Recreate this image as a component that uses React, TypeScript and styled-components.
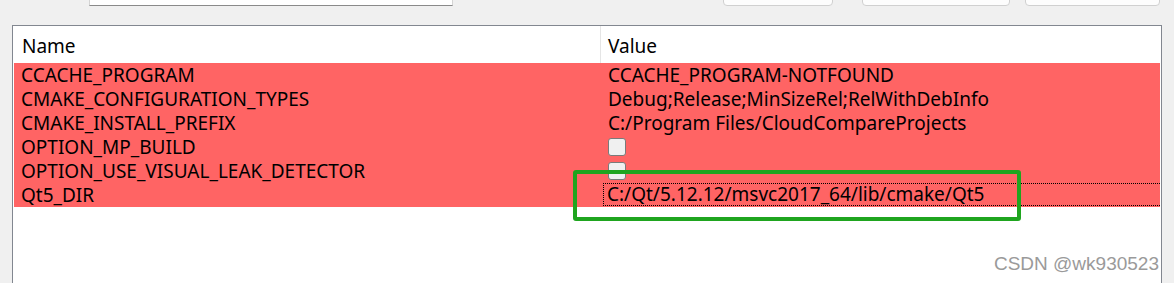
import React from "react";
import styled, { createGlobalStyle } from "styled-components";

const GlobalStyle = createGlobalStyle`
	body {
		margin: 0;
		background: #f0f0f0;
		font-family: "Noto Sans", "Open Sans", sans-serif;
	}
`;

const Page = styled.div`
	position: relative;
	width: 1174px;
	height: 283px;
	overflow: hidden;
`;

const Toolbar = styled.div`
	display: flex;
	align-items: flex-end;
	height: 6px;
	overflow: hidden;
	padding-left: 89px;
`;

const SearchBox = styled.div`
	width: 364px;
	height: 28px;
	box-sizing: border-box;
	background: #fff;
	border: 1px solid #d4d4d4;
	border-bottom-color: #8a8a8a;
`;

const ButtonGroup = styled.div`
	display: flex;
	margin-left: 270px;
`;

const ToolButton = styled.div<{ w: number; gap: number }>`
	width: ${p => p.w}px;
	height: 28px;
	margin-left: ${p => p.gap}px;
	box-sizing: border-box;
	background: #fdfdfd;
	border: 1px solid #d0d0d0;
	border-radius: 4px;
`;

const Table = styled.div`
	margin: 19px 0 0 12px;
	width: 1150px;
	height: 260px;
	box-sizing: border-box;
	background: #fff;
	border: 1px solid #828790;
	border-bottom: none;
	padding: 0 1px;
`;

const HeaderRow = styled.div`
	display: grid;
	grid-template-columns: 586px 1fr;
	height: 37px;
`;

const HeaderCell = styled.div<{ divider?: boolean }>`
	display: flex;
	align-items: center;
	padding-left: ${p => (p.divider ? 7 : 8)}px;
	padding-top: 3px;
	border-left: ${p => (p.divider ? "1px solid #e5e5e5" : "none")};
	font-size: 19px;
	color: #000;
`;

const Row = styled.div<{ fresh?: boolean }>`
	display: grid;
	grid-template-columns: 586px 1fr;
	height: 24px;
	background: ${p => (p.fresh ? "#ff6464" : "#fff")};
`;

const Cell = styled.div<{ pad: number }>`
	padding-left: ${p => p.pad}px;
	font-size: 19px;
	line-height: 24px;
	color: #000;
	white-space: nowrap;
	overflow: hidden;
`;

/* Qt style focus rectangle: 1px on / 1px off dots */
const FocusBox = styled.div`
	height: 23px;
	margin-left: 3px;
	padding: 1px 0 0 4px;
	box-sizing: border-box;
	background:
		linear-gradient(to right, #000 50%, transparent 50%) top left / 2px 1px repeat-x,
		linear-gradient(to right, #000 50%, transparent 50%) bottom left / 2px 1px repeat-x,
		linear-gradient(to bottom, #000 50%, transparent 50%) top left / 1px 2px repeat-y;
	line-height: 21px;
	font-size: 19px;
	white-space: nowrap;
`;

const CheckBox = styled.div`
	width: 18px;
	height: 18px;
	margin: 3px 0 0 8px;
	box-sizing: border-box;
	background: #f0f0f0;
	border: 1px solid #7a7a7a;
	border-radius: 3px;
`;

const Highlight = styled.div`
	position: absolute;
	left: 573px;
	top: 170px;
	width: 448px;
	height: 51px;
	box-sizing: border-box;
	border: 4px solid #1fa51f;
	border-radius: 3px;
`;

const Watermark = styled.div`
	position: absolute;
	right: 15px;
	top: 253px;
	font-family: "Liberation Sans", Arial, sans-serif;
	font-size: 19px;
	color: #9a9a9a;
`;

type Entry = { name: string; value?: string; check?: boolean; focus?: boolean };

const entries: Entry[] = [
	{ name: "CCACHE_PROGRAM", value: "CCACHE_PROGRAM-NOTFOUND" },
	{ name: "CMAKE_CONFIGURATION_TYPES", value: "Debug;Release;MinSizeRel;RelWithDebInfo" },
	{ name: "CMAKE_INSTALL_PREFIX", value: "C:/Program Files/CloudCompareProjects" },
	{ name: "OPTION_MP_BUILD", check: true },
	{ name: "OPTION_USE_VISUAL_LEAK_DETECTOR", check: true },
	{ name: "Qt5_DIR", value: "C:/Qt/5.12.12/msvc2017_64/lib/cmake/Qt5", focus: true },
];

function ValueCell({ entry }: { entry: Entry }) {
	if (entry.check) return <div><CheckBox /></div>;
	if (entry.focus) return <div><FocusBox>{entry.value}</FocusBox></div>;
	return <Cell pad={8}>{entry.value}</Cell>;
}

export default function App() {
	return <Page>
		<GlobalStyle/>
		<Toolbar>
			<SearchBox/>
			<ButtonGroup>
				<ToolButton w={110} gap={0}/>
				<ToolButton w={148} gap={29}/>
				<ToolButton w={135} gap={15}/>
			</ButtonGroup>
		</Toolbar>
		<Table>
			<HeaderRow>
				<HeaderCell>Name</HeaderCell>
				<HeaderCell divider>Value</HeaderCell>
			</HeaderRow>
			{entries.map(e => <Row key={e.name} fresh>
				<Cell pad={7}>{e.name}</Cell>
				<ValueCell entry={e}/>
			</Row>)}
		</Table>
		<Highlight/>
		<Watermark>CSDN @wk930523</Watermark>
	</Page>;
}
